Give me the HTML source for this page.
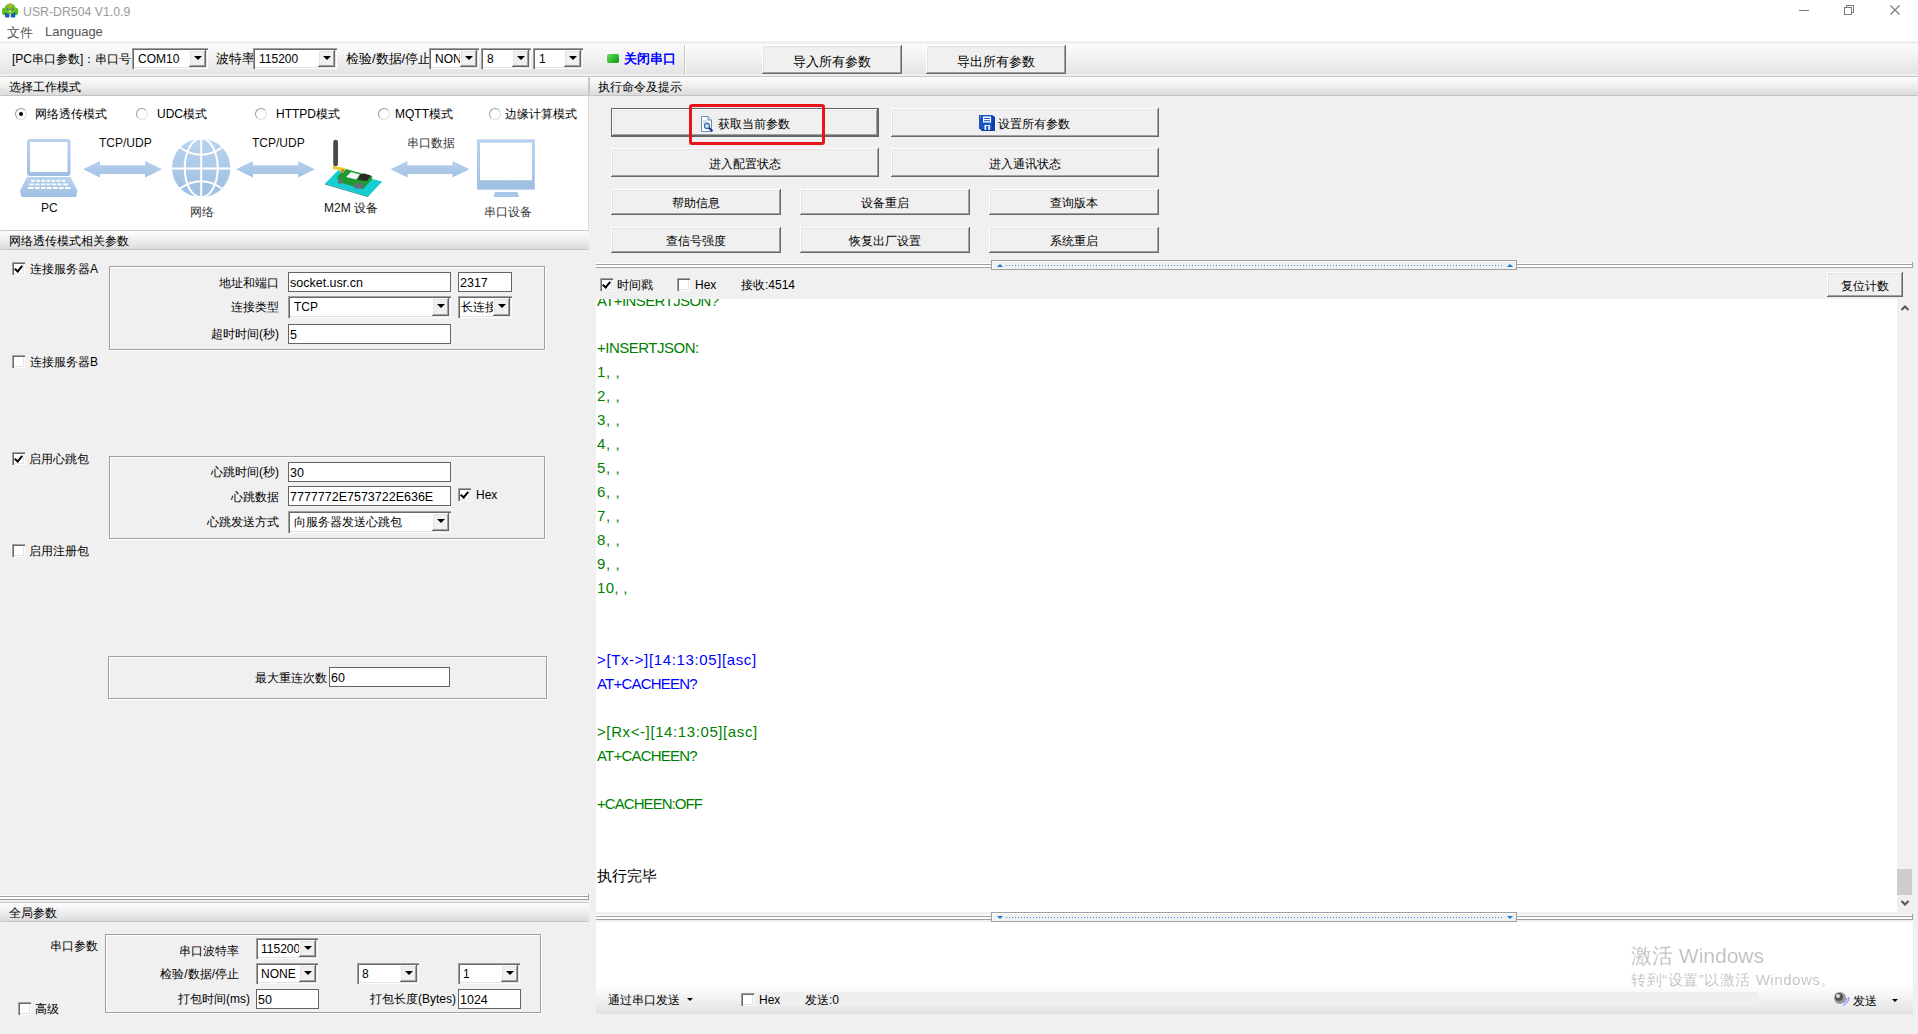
<!DOCTYPE html>
<html><head><meta charset="utf-8">
<style>
*{box-sizing:border-box}
html,body{margin:0;padding:0}
body{width:1918px;height:1034px;overflow:hidden;position:relative;background:#f0f0f0;font-family:"Liberation Sans",sans-serif;font-size:12px;color:#000}
.a{position:absolute}
.t{position:absolute;white-space:nowrap;line-height:14px}
.hdr{position:absolute;height:20px;background:linear-gradient(#fdfdfd,#f3f3f3 35%,#dcdcdc);border-top:1px solid #c9c9c9;border-bottom:1px solid #c4c4c4;border-radius:2px}
.hdr span{position:absolute;left:9px;top:3px;font-size:12px;line-height:14px}
.btn{position:absolute;background:#f0f0f0;box-shadow:inset -1px -1px #696969,inset 1px 1px #fff,inset -2px -2px #a0a0a0,inset 2px 2px #e3e3e3;text-align:center;font-size:12px}
.edit{position:absolute;background:#fff;border:1px solid #646464;height:20px;font-size:12.5px;line-height:20px;padding-left:1px;white-space:nowrap;overflow:hidden}
.combo{position:absolute;background:#fff;box-shadow:inset 1px 1px #a0a0a0,inset 2px 2px #696969,inset -1px -1px #fff,inset -2px -2px #e3e3e3;height:20px;font-size:12px;line-height:22px;padding-left:6px;white-space:nowrap;overflow:hidden}
.combo i{position:absolute;right:2px;top:2px;bottom:2px;width:17px;background:#f0f0f0;box-shadow:inset -1px -1px #696969,inset 1px 1px #fff,inset -2px -2px #a0a0a0,inset 2px 2px #e3e3e3}
.combo i:after{content:"";position:absolute;left:5px;top:6px;border-left:4px solid transparent;border-right:4px solid transparent;border-top:4px solid #000}
.grp{position:absolute;border:1px solid #a0a0a0;box-shadow:1px 1px #fff,inset 1px 1px #fff}
.cb{position:absolute;width:13px;height:13px;background:#fff;box-shadow:inset 1px 1px #a0a0a0,inset 2px 2px #696969,inset -1px -1px #fff,inset -2px -2px #e3e3e3}
.cb.on:after{content:"";position:absolute;left:4px;top:2px;width:3px;height:6px;border:solid #000;border-width:0 2px 2px 0;transform:rotate(40deg)}
.rd{position:absolute;width:12px;height:12px;border-radius:50%;background:#fff;border:1px solid #9a9a9a;border-right-color:#dedede;border-bottom-color:#dedede}
.rd.on:after{content:"";position:absolute;left:3px;top:3px;width:4px;height:4px;border-radius:50%;background:#000}
.split{position:absolute;height:6px;border-top:1px solid #fff;background:linear-gradient(#a0a0a0 0 1px,#fff 1px 3px,#a0a0a0 3px 4px,#f0f0f0 4px)}
.log{position:absolute;left:1px;font-size:15px;line-height:24px;white-space:pre}
.g{color:#008000}.bl{color:#0000ff}
</style></head><body>

<!-- title bar -->
<div class="a" style="left:0;top:0;width:1918px;height:41px;background:#fff"></div>
<svg class="a" style="left:0;top:0" width="22" height="22" viewBox="0 0 22 22">
  <ellipse cx="4" cy="11.5" rx="2" ry="3.8" fill="#5cbf1a"/>
  <ellipse cx="16.2" cy="11.5" rx="2" ry="3.8" fill="#5cbf1a"/>
  <rect x="5" y="12" width="4.5" height="5.5" rx="1.2" fill="#1f5fb0"/>
  <rect x="10.8" y="12" width="4.5" height="5.5" rx="1.2" fill="#1f5fb0"/>
  <ellipse cx="10.1" cy="8.8" rx="5.6" ry="5.2" fill="#6cc420"/>
  <rect x="9.1" y="3" width="2" height="4.5" rx="1" fill="#f0a030"/>
  <circle cx="7.4" cy="9.2" r="1" fill="#6a5ac8"/><circle cx="12.5" cy="9.2" r="1" fill="#6a5ac8"/>
  <rect x="9" y="11" width="2.2" height="1" fill="#fff"/>
</svg>
<div class="t" style="left:23px;top:5px;font-size:12.3px;color:#999">USR-DR504 V1.0.9</div>
<svg class="a" style="left:1790px;top:0" width="120" height="22" viewBox="1790 0 120 22">
 <g stroke="#7a7a7a" stroke-width="1" fill="none" shape-rendering="crispEdges">
  <line x1="1799" y1="10.5" x2="1809" y2="10.5"/>
  <rect x="1844.5" y="7.5" width="7" height="7"/>
  <path d="M1846.5 7.5 V5.5 H1853.5 V12.5 H1851.5"/>
 </g>
 <path d="M1890.5 5.5 L1899.5 14.5 M1899.5 5.5 L1890.5 14.5" stroke="#7a7a7a" stroke-width="1.15" fill="none"/>
</svg>
<div class="t" style="left:7px;top:26px;font-size:13px;color:#555">文件</div>
<div class="t" style="left:45px;top:25px;font-size:13px;color:#555">Language</div>

<!-- toolbar -->
<div class="a" style="left:0;top:44px;width:1918px;height:30px;background:linear-gradient(#fcfcfc,#e4e4e4)"></div>

<div class="t" style="left:12px;top:52px;font-size:12px">[PC串口参数]：串口号</div>
<div class="combo" style="left:132px;top:48px;width:76px;height:21px">COM10<i></i></div>
<div class="t" style="left:216px;top:52px;font-size:13px">波特率</div>
<div class="combo" style="left:253px;top:48px;width:84px;height:21px">115200<i></i></div>
<div class="t" style="left:346px;top:52px;font-size:13px">检验/数据/停止</div>
<div class="combo" style="left:429px;top:48px;width:50px;height:21px">NONE<i></i></div>
<div class="combo" style="left:481px;top:48px;width:50px;height:21px">8<i></i></div>
<div class="combo" style="left:533px;top:48px;width:50px;height:21px">1<i></i></div>
<div class="a" style="left:607px;top:54px;width:12px;height:9px;border-radius:2px;background:linear-gradient(135deg,#5fe05f,#0a9a0a)"></div>
<div class="t" style="left:624px;top:52px;font-size:13px;font-weight:bold;color:#0000ff">关闭串口</div>
<div class="a" style="left:684px;top:45px;width:1px;height:30px;background:#c8c8c8"></div>
<div class="a" style="left:685px;top:45px;width:1px;height:30px;background:#fff"></div>
<div class="btn" style="left:762px;top:45px;width:140px;height:29px;line-height:33px;font-size:13px">导入所有参数</div>
<div class="btn" style="left:926px;top:45px;width:140px;height:29px;line-height:33px;font-size:13px">导出所有参数</div>

<!-- section headers -->
<div class="hdr" style="left:0;top:76px;width:590px;border-right:2px solid #c8c8c8;border-radius:2px 0 0 2px"><span>选择工作模式</span></div>
<div class="hdr" style="left:590px;top:76px;width:1330px;border-radius:0"><span style="left:8px">执行命令及提示</span></div>


<!-- diagram -->
<div class="a" style="left:0;top:96px;width:589px;height:134px;background:#fff;border-right:1px solid #dcdcdc"></div>
<div class="rd on" style="left:15px;top:108px"></div><div class="t" style="left:35px;top:107px;font-size:12px">网络透传模式</div>
<div class="rd" style="left:136px;top:108px"></div><div class="t" style="left:157px;top:107px;font-size:12px">UDC模式</div>
<div class="rd" style="left:255px;top:108px"></div><div class="t" style="left:276px;top:107px;font-size:12px">HTTPD模式</div>
<div class="rd" style="left:378px;top:108px"></div><div class="t" style="left:395px;top:107px;font-size:12px">MQTT模式</div>
<div class="rd" style="left:489px;top:108px"></div><div class="t" style="left:505px;top:107px;font-size:12px">边缘计算模式</div>
<svg class="a" style="left:0;top:96px" width="589" height="134" viewBox="0 96 589 134">
 <defs>
  <linearGradient id="bg1" x1="0" y1="0" x2="0" y2="1"><stop offset="0" stop-color="#b9d3ee"/><stop offset="1" stop-color="#9ebfe2"/></linearGradient>
  <linearGradient id="bg2" x1="0" y1="0" x2="0" y2="1"><stop offset="0" stop-color="#b7d1ed"/><stop offset="1" stop-color="#a3c2e4"/></linearGradient>
 </defs>
 <!-- laptop -->
 <rect x="27" y="139" width="43.5" height="37" rx="3" fill="url(#bg1)"/>
 <rect x="30" y="142" width="37.5" height="30" fill="#fff"/>
 <path d="M27 177 L70.5 177 L77.5 190.5 L76 197 L21.5 197 L20 190.5 Z" fill="url(#bg1)"/>
 <g fill="#fff">
  <rect x="31" y="180" width="4" height="1.6"/><rect x="36.5" y="180" width="3.5" height="1.6"/><rect x="41.5" y="180" width="3.5" height="1.6"/><rect x="46.5" y="180" width="3.5" height="1.6"/><rect x="51.5" y="180" width="3.5" height="1.6"/><rect x="56.5" y="180" width="3.5" height="1.6"/><rect x="61.5" y="180" width="4" height="1.6"/>
  <rect x="29.5" y="183.5" width="4.5" height="1.8"/><rect x="35.5" y="183.5" width="4" height="1.8"/><rect x="41" y="183.5" width="4" height="1.8"/><rect x="46.5" y="183.5" width="4" height="1.8"/><rect x="52" y="183.5" width="4" height="1.8"/><rect x="57.5" y="183.5" width="4" height="1.8"/><rect x="63" y="183.5" width="5" height="1.8"/>
  <rect x="28" y="187" width="5.5" height="2"/><rect x="35" y="187" width="4.5" height="2"/><rect x="41" y="187" width="4.5" height="2"/><rect x="47" y="187" width="4.5" height="2"/><rect x="53" y="187" width="4.5" height="2"/><rect x="59" y="187" width="4.5" height="2"/><rect x="65" y="187" width="5.5" height="2"/>
 </g>
 <!-- arrows -->
 <path id="arw" d="M83 169.3 L100 161 L100 165.2 L145 165.2 L145 161 L162 169.3 L145 177.5 L145 174 L100 174 L100 177.5 Z" fill="url(#bg2)"/>
 <use href="#arw" x="153"/>
 <use href="#arw" x="307.5"/>
 <!-- globe -->
 <circle cx="201.2" cy="168" r="29.2" fill="url(#bg1)"/>
 <g stroke="#fff" stroke-width="2" fill="none">
  <line x1="201.2" y1="138" x2="201.2" y2="198"/>
  <line x1="171" y1="168.5" x2="231" y2="168.5"/>
  <ellipse cx="201.2" cy="168" rx="16.5" ry="29.5"/>
  <path d="M180 147.5 Q201 162 222 147.5"/>
  <path d="M180 188.5 Q201 174 222 188.5"/>
 </g>
 <!-- M2M device -->
 <path d="M325 183.4 L338.2 170.2 L382.3 181.5 L368.4 196.3 Z" fill="#17cdd3"/>
 <path d="M325 183.4 L368.4 196.3 L368.4 197.3 L325 184.4Z" fill="#0e9aa0"/>
 <path d="M337.5 176 L346 169 L372.5 176.5 L371.5 180 L363 189 L338 182 Z" fill="#1f9a33"/>
 <path d="M346 177 L351 172 L360 174.5 L356 179.5 Z" fill="#f4f4f4"/>
 <path d="M360 174.5 L364 173.5 L371 175.5 L367 181 L358 180 Z" fill="#2a2a2a"/>
 <rect x="338" y="179.5" width="4" height="4" fill="#6a6a7a"/>
 <rect x="354.5" y="183.5" width="8" height="5" fill="#6a6a7a"/>
 <rect x="333.2" y="139.7" width="4.8" height="26.7" rx="2.4" fill="#4a4a4a"/>
 <path d="M333 166 L345 168 L345 171 L333 169Z" fill="#e8d020"/>
 <rect x="341" y="169" width="3" height="4" fill="#d09020"/>
 <!-- monitor -->
 <rect x="477" y="139.3" width="57.8" height="50.3" fill="url(#bg1)"/>
 <rect x="480" y="142.7" width="52" height="37.5" fill="#fff"/>
 <path d="M495 192 L517.5 192 L519 197 L493.3 197 Z" fill="#a9c7e6"/>
</svg>
<div class="t" style="left:99px;top:136px;font-size:12px;color:#111">TCP/UDP</div>
<div class="t" style="left:252px;top:136px;font-size:12px;color:#111">TCP/UDP</div>
<div class="t" style="left:407px;top:136px;font-size:11.5px;color:#333">串口数据</div>
<div class="t" style="left:41px;top:201px;font-size:12px;color:#111">PC</div>
<div class="t" style="left:190px;top:205px;font-size:11.5px;color:#333">网络</div>
<div class="t" style="left:324px;top:201px;font-size:12px;color:#111">M2M 设备</div>
<div class="t" style="left:484px;top:205px;font-size:11.5px;color:#333">串口设备</div>

<!-- params section -->
<div class="hdr" style="left:0;top:230px;width:589px"><span>网络透传模式相关参数</span></div>

<div class="cb on" style="left:12px;top:262px"></div><div class="t" style="left:30px;top:262px">连接服务器A</div>
<div class="grp" style="left:109px;top:266px;width:436px;height:84px"></div>
<div class="t" style="right:1639px;top:276px">地址和端口</div>
<div class="edit" style="left:288px;top:272px;width:163px">socket.usr.cn</div>
<div class="edit" style="left:458px;top:272px;width:54px">2317</div>
<div class="t" style="right:1639px;top:300px">连接类型</div>
<div class="combo" style="left:288px;top:296px;width:163px;height:22px">TCP<i></i></div>
<div class="combo" style="left:458px;top:296px;width:54px;height:22px;padding-left:3px">长连接<i></i></div>
<div class="t" style="right:1639px;top:327px">超时时间(秒)</div>
<div class="edit" style="left:288px;top:324px;width:163px">5</div>

<div class="cb" style="left:12px;top:355px"></div><div class="t" style="left:30px;top:355px">连接服务器B</div>

<div class="cb on" style="left:12px;top:452px"></div><div class="t" style="left:29px;top:452px">启用心跳包</div>
<div class="grp" style="left:109px;top:456px;width:436px;height:83px"></div>
<div class="t" style="right:1639px;top:465px">心跳时间(秒)</div>
<div class="edit" style="left:288px;top:462px;width:163px">30</div>
<div class="t" style="right:1639px;top:490px">心跳数据</div>
<div class="edit" style="left:288px;top:486px;width:163px">7777772E7573722E636E</div>
<div class="cb on" style="left:458px;top:488px"></div><div class="t" style="left:476px;top:488px">Hex</div>
<div class="t" style="right:1639px;top:515px">心跳发送方式</div>
<div class="combo" style="left:288px;top:511px;width:163px;height:22px">向服务器发送心跳包<i></i></div>

<div class="cb" style="left:12px;top:544px"></div><div class="t" style="left:29px;top:544px">启用注册包</div>

<div class="grp" style="left:108px;top:656px;width:439px;height:43px"></div>
<div class="t" style="right:1591px;top:671px">最大重连次数</div>
<div class="edit" style="left:329px;top:667px;width:121px">60</div>

<div class="split" style="left:0;top:895px;width:589px"></div><div class="a" style="left:588px;top:894px;width:1px;height:6px;background:#a0a0a0"></div>
<div class="hdr" style="left:0;top:902px;width:589px"><span>全局参数</span></div>
<div class="t" style="left:50px;top:939px">串口参数</div>
<div class="grp" style="left:105px;top:934px;width:436px;height:79px"></div>
<div class="t" style="right:1679px;top:944px">串口波特率</div>
<div class="combo" style="left:256px;top:938px;width:62px;height:21px;padding-left:5px">115200<i></i></div>
<div class="t" style="right:1679px;top:967px">检验/数据/停止</div>
<div class="combo" style="left:256px;top:963px;width:62px;height:21px;padding-left:5px">NONE<i></i></div>
<div class="combo" style="left:357px;top:963px;width:62px;height:21px;padding-left:5px">8<i></i></div>
<div class="combo" style="left:458px;top:963px;width:62px;height:21px;padding-left:5px">1<i></i></div>
<div class="t" style="right:1668px;top:992px">打包时间(ms)</div>
<div class="edit" style="left:256px;top:989px;width:63px">50</div>
<div class="t" style="right:1462px;top:992px">打包长度(Bytes)</div>
<div class="edit" style="left:458px;top:989px;width:63px">1024</div>
<div class="cb" style="left:18px;top:1002px"></div><div class="t" style="left:35px;top:1002px">高级</div>


<!-- right panel -->
<div class="a" style="left:590px;top:96px;width:1px;height:800px;background:#f0f0f0"></div>
<div class="btn" style="left:611px;top:108px;width:268px;height:29px;line-height:33px;box-shadow:inset 0 0 0 1px #646464,inset -2px -2px #696969,inset 2px 2px #fff,inset -3px -3px #a0a0a0,inset 3px 3px #e8e8e8"><svg style="position:absolute;left:88px;top:8px" width="16" height="16" viewBox="0 0 16 16"><path d="M2.5 0.5 H9 L12.5 4 V15.5 H2.5 Z" fill="#fff" stroke="#6a8ab8" stroke-width="1"/><path d="M9 0.5 V4 H12.5" fill="#dde8f4" stroke="#6a8ab8" stroke-width="1"/><g stroke="#9ab" stroke-width="0.8"><line x1="4" y1="5" x2="8" y2="5"/><line x1="4" y1="7" x2="10" y2="7"/></g><circle cx="8" cy="10" r="2.6" fill="#bfe0f5" stroke="#3a6aa8" stroke-width="1.1"/><path d="M9.8 11.8 L13.5 15.3" stroke="#1a3a9a" stroke-width="2.2"/></svg><span style="position:absolute;left:107px;top:0;line-height:33px">获取当前参数</span></div>
<div class="btn" style="left:891px;top:108px;width:268px;height:29px;line-height:33px"><svg style="position:absolute;left:88px;top:7px" width="16" height="16" viewBox="0 0 16 16"><path d="M0 0 H13 L16 2 V16 H3 L0 13 Z" fill="#0e3fae"/><path d="M0 0 H13 V14 H0Z" fill="#1a55c8"/><rect x="4" y="1.5" width="8" height="6" fill="#fff"/><rect x="5" y="3" width="6" height="1" fill="#1a55c8"/><rect x="5" y="5.2" width="6" height="1" fill="#1a55c8"/><rect x="5.5" y="10" width="5.5" height="5" fill="#f4f4ff"/><rect x="7.2" y="11" width="2" height="4" fill="#1a55c8"/><rect x="1" y="1.5" width="1" height="1" fill="#cfe0ff"/></svg><span style="position:absolute;left:107px;top:0;line-height:33px">设置所有参数</span></div>
<div class="a" style="left:689px;top:104px;width:136px;height:41px;border:3px solid #e8141a;border-radius:3px"></div>
<div class="btn" style="left:611px;top:148px;width:268px;height:29px;line-height:33px">进入配置状态</div>
<div class="btn" style="left:891px;top:148px;width:268px;height:29px;line-height:33px">进入通讯状态</div>
<div class="btn" style="left:611px;top:189px;width:170px;height:26px;line-height:29px">帮助信息</div>
<div class="btn" style="left:800px;top:189px;width:170px;height:26px;line-height:29px">设备重启</div>
<div class="btn" style="left:989px;top:189px;width:170px;height:26px;line-height:29px">查询版本</div>
<div class="btn" style="left:611px;top:227px;width:170px;height:26px;line-height:29px">查信号强度</div>
<div class="btn" style="left:800px;top:227px;width:170px;height:26px;line-height:29px">恢复出厂设置</div>
<div class="btn" style="left:989px;top:227px;width:170px;height:26px;line-height:29px">系统重启</div>

<div class="split" style="left:596px;top:263px;width:1317px"></div><div class="a" style="left:1912px;top:262px;width:1px;height:6px;background:#a0a0a0"></div>
<div class="a" style="left:991px;top:260px;width:526px;height:10px;background:#f0f0f0;border:1px solid #a0a0a0;box-shadow:inset 1px 1px #fff"></div>
<div class="a" style="left:1006px;top:265px;width:496px;height:1px;background:repeating-linear-gradient(90deg,#3a8ad8 0 1px,transparent 1px 3px)"></div>
<div class="a" style="left:997px;top:264px;border-left:3px solid transparent;border-right:3px solid transparent;border-bottom:3px solid #1a7ad8"></div>
<div class="a" style="left:1507px;top:264px;border-left:3px solid transparent;border-right:3px solid transparent;border-bottom:3px solid #1a7ad8"></div>

<div class="cb on" style="left:600px;top:278px"></div><div class="t" style="left:617px;top:278px">时间戳</div>
<div class="cb" style="left:677px;top:278px"></div><div class="t" style="left:695px;top:278px">Hex</div>
<div class="t" style="left:741px;top:278px">接收:4514</div>
<div class="btn" style="left:1827px;top:272px;width:76px;height:25px;line-height:28px">复位计数</div>

<div class="a" style="left:596px;top:299px;width:1301px;height:613px;background:#fff;overflow:hidden">
<div class="log g" style="top:-10px;letter-spacing:-0.6px">AT+INSERTJSON?</div>
<div class="log g" style="top:37px;letter-spacing:-0.5px">+INSERTJSON:</div>
<div class="log g" style="top:61px;letter-spacing:0.6px">1, ,</div>
<div class="log g" style="top:85px;letter-spacing:0.6px">2, ,</div>
<div class="log g" style="top:109px;letter-spacing:0.6px">3, ,</div>
<div class="log g" style="top:133px;letter-spacing:0.6px">4, ,</div>
<div class="log g" style="top:157px;letter-spacing:0.6px">5, ,</div>
<div class="log g" style="top:181px;letter-spacing:0.6px">6, ,</div>
<div class="log g" style="top:205px;letter-spacing:0.6px">7, ,</div>
<div class="log g" style="top:229px;letter-spacing:0.6px">8, ,</div>
<div class="log g" style="top:253px;letter-spacing:0.6px">9, ,</div>
<div class="log g" style="top:277px;letter-spacing:0.3px">10, ,</div>
<div class="log bl" style="top:349px;letter-spacing:0.63px">&gt;[Tx-&gt;][14:13:05][asc]</div>
<div class="log bl" style="top:373px;letter-spacing:-0.8px">AT+CACHEEN?</div>
<div class="log g" style="top:421px;letter-spacing:0.6px">&gt;[Rx&lt;-][14:13:05][asc]</div>
<div class="log g" style="top:445px;letter-spacing:-0.8px">AT+CACHEEN?</div>
<div class="log g" style="top:493px;letter-spacing:-0.94px">+CACHEEN:OFF</div>
<div class="log" style="top:565px">执行完毕</div>
</div>
<!-- scrollbar -->
<div class="a" style="left:1897px;top:299px;width:16px;height:613px;background:#f0f0f0"></div>
<svg class="a" style="left:1900px;top:304px" width="10" height="8"><path d="M1.5 6 L5 2.5 L8.5 6" stroke="#555" stroke-width="2" fill="none"/></svg>
<div class="a" style="left:1897px;top:869px;width:15px;height:26px;background:#cdcdcd"></div>
<svg class="a" style="left:1900px;top:899px" width="10" height="8"><path d="M1.5 2 L5 5.5 L8.5 2" stroke="#555" stroke-width="2" fill="none"/></svg>

<div class="split" style="left:596px;top:915px;width:1317px"></div><div class="a" style="left:1912px;top:914px;width:1px;height:6px;background:#a0a0a0"></div>
<div class="a" style="left:991px;top:912px;width:526px;height:10px;background:#f0f0f0;border:1px solid #a0a0a0;box-shadow:inset 1px 1px #fff"></div>
<div class="a" style="left:1006px;top:917px;width:496px;height:1px;background:repeating-linear-gradient(90deg,#3a8ad8 0 1px,transparent 1px 3px)"></div>
<div class="a" style="left:997px;top:916px;border-left:3px solid transparent;border-right:3px solid transparent;border-top:3px solid #1a7ad8"></div>
<div class="a" style="left:1507px;top:916px;border-left:3px solid transparent;border-right:3px solid transparent;border-top:3px solid #1a7ad8"></div>

<div class="a" style="left:596px;top:922px;width:1317px;height:63px;background:#fff"></div>
<div class="a" style="left:596px;top:985px;width:1317px;height:29px;background:linear-gradient(#fff,#f3f3f3 40%,#e3e3e3)"></div>
<div class="a" style="left:740px;top:992px;width:1017px;height:14px;background:#efefef"></div>
<div class="t" style="left:608px;top:993px">通过串口发送</div>
<div class="a" style="left:687px;top:998px;border-left:3px solid transparent;border-right:3px solid transparent;border-top:3px solid #000"></div>
<div class="cb" style="left:741px;top:993px"></div><div class="t" style="left:759px;top:993px">Hex</div>
<div class="t" style="left:805px;top:993px">发送:0</div>
<svg class="a" style="left:1833px;top:991px" width="17" height="16" viewBox="0 0 17 16"><circle cx="7" cy="7" r="6" fill="#9a9a9a"/><circle cx="6" cy="6" r="4" fill="#555"/><circle cx="5" cy="5" r="2" fill="#ddd"/><path d="M11 12 Q14 10 14 7" stroke="#7a7aff" stroke-width="1" fill="none"/><path d="M10 14.5 Q16 12 16 6" stroke="#7a7aff" stroke-width="1" fill="none"/></svg>
<div class="t" style="left:1853px;top:994px">发送</div>
<div class="a" style="left:1892px;top:999px;border-left:3px solid transparent;border-right:3px solid transparent;border-top:3px solid #000"></div>

<div class="t" style="left:1631px;top:944px;font-size:21px;line-height:24px;color:rgba(0,0,0,0.25)">激活 Windows</div>
<div class="t" style="left:1631px;top:971px;font-size:15px;line-height:17px;letter-spacing:0.55px;color:rgba(0,0,0,0.25)">转到“设置”以激活 Windows。</div>

</body></html>
